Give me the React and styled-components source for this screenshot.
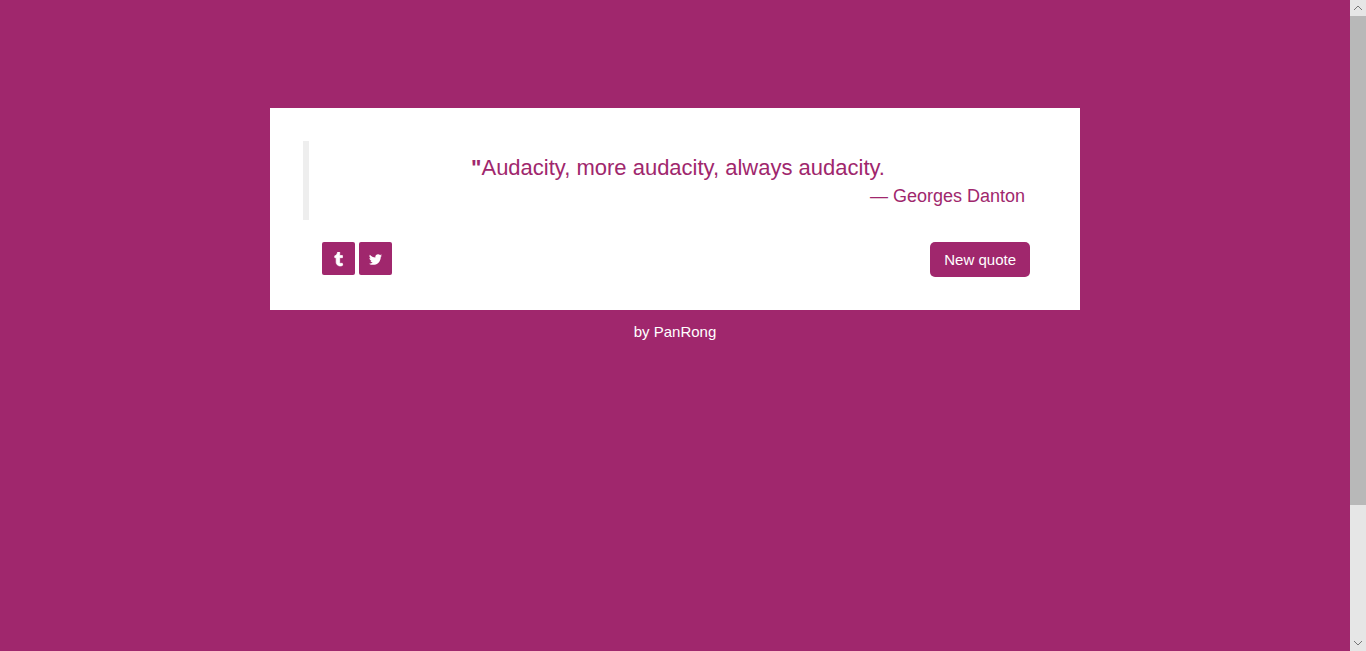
import React from "react";
import styled, { createGlobalStyle } from "styled-components";

const plum = "#a0276d";

const GlobalStyle = createGlobalStyle`
  *, *::before, *::after { box-sizing: border-box; }
  body {
    margin: 0;
    background: ${plum};
    color: #fff;
    font-family: "Liberation Sans", Arial, sans-serif;
    font-size: 15px;
    line-height: 21px;
  }
`;

const Page = styled.div`
  display: grid;
  grid-template-columns: minmax(0, 1fr) 16px;
  height: 100vh;
`;

const Main = styled.main`
  padding-top: 8%;
  overflow: hidden;
`;

const Card = styled.section`
  width: 60%;
  margin: 0 auto;
  padding: 33px;
  background: #fff;
  color: ${plum};
`;

const Quote = styled.blockquote`
  margin: 0 0 22px;
  padding: 11px 22px;
  border-left: 6px solid #eee;
`;

const QuoteText = styled.p`
  margin: 0;
  font-size: 22px;
  line-height: 31px;
  text-align: center;
`;

const Author = styled.footer`
  font-size: 18px;
  line-height: 26px;
  text-align: right;
`;

const Actions = styled.div`
  display: flex;
  justify-content: space-between;
  align-items: flex-start;
  padding: 0 17px 0 19px;
`;

const ShareLinks = styled.div`
  display: flex;
  gap: 4px;
`;

const ShareLink = styled.a`
  display: flex;
  align-items: center;
  justify-content: center;
  width: 33px;
  height: 33px;
  padding-top: 2px;
  border-radius: 2px;
  background: ${plum};
  color: #fff;
`;

const NewQuoteButton = styled.button`
  height: 35px;
  padding: 0 14px;
  border: 0;
  border-radius: 5px;
  background: ${plum};
  color: #fff;
  font: inherit;
  cursor: pointer;
`;

const Credit = styled.p`
  margin: 11px 0 0;
  text-align: center;
`;

const ScrollRail = styled.div`
  display: flex;
  flex-direction: column;
  background: #e6e6e6;
`;

const ScrollArrow = styled.div`
  display: flex;
  align-items: center;
  justify-content: center;
  flex: 0 0 16px;
  color: #777;
`;

const ScrollTrack = styled.div`
  flex: 1;
`;

const ScrollThumb = styled.div`
  height: 79%;
  background: #b8b8b8;
`;

function TumblrIcon() {
  return (
    <svg width="15" height="15" viewBox="0 0 1792 1792" fill="currentColor" stroke="currentColor" strokeWidth="90" aria-hidden="true">
      <path d="M1328 1329l80 237q-23 35-111 66t-177 32q-104 2-190.5-26t-142.5-74-95-106-55.5-120-16.5-118v-544h-168v-215q72-26 129-69.5t91-90 58-102 34-99 15-88.5q1-5 4.5-8.5t7.5-3.5h244v424h333v252h-334v518q0 30 6.5 56t22.5 52.5 49.5 41.5 81.5 14q78-2 134-29z" />
    </svg>
  );
}

function TwitterIcon() {
  return (
    <svg width="15" height="15" viewBox="0 0 1792 1792" fill="currentColor" aria-hidden="true">
      <path d="M1684 408q-67 98-162 167 1 14 1 42 0 130-38 259.5t-115.5 248.5-184.5 210.5-258 146-323 54.5q-271 0-496-145 35 4 78 4 225 0 401-138-105-2-188-64.5t-114-159.5q33 5 61 5 43 0 85-11-112-23-185.5-111.5t-73.5-205.5v-4q68 38 146 41-66-44-105-115t-39-154q0-88 44-163 121 149 294.5 238.5t371.5 99.5q-8-38-8-74 0-134 94.5-228.5t228.5-94.5q140 0 236 102 109-21 205-78-37 115-142 178 93-10 186-50z" />
    </svg>
  );
}

function Chevron({ down }) {
  return (
    <svg width="10" height="6" viewBox="0 0 10 6" fill="none" stroke="currentColor" aria-hidden="true">
      <path d={down ? "M1 1l4 4 4-4" : "M1 5l4-4 4 4"} />
    </svg>
  );
}

export default function App() {
  return (
    <>
      <GlobalStyle />
      <Page>
        <Main>
          <Card>
            <Quote>
              <QuoteText>
                <strong>"</strong>Audacity, more audacity, always audacity.
              </QuoteText>
              <Author>— Georges Danton</Author>
            </Quote>
            <Actions>
              <ShareLinks>
                <ShareLink href="#tumblr" aria-label="Share on Tumblr">
                  <TumblrIcon />
                </ShareLink>
                <ShareLink href="#twitter" aria-label="Share on Twitter">
                  <TwitterIcon />
                </ShareLink>
              </ShareLinks>
              <NewQuoteButton type="button">New quote</NewQuoteButton>
            </Actions>
          </Card>
          <Credit>by PanRong</Credit>
        </Main>
        <ScrollRail aria-hidden="true">
          <ScrollArrow><Chevron /></ScrollArrow>
          <ScrollTrack><ScrollThumb /></ScrollTrack>
          <ScrollArrow><Chevron down /></ScrollArrow>
        </ScrollRail>
      </Page>
    </>
  );
}
